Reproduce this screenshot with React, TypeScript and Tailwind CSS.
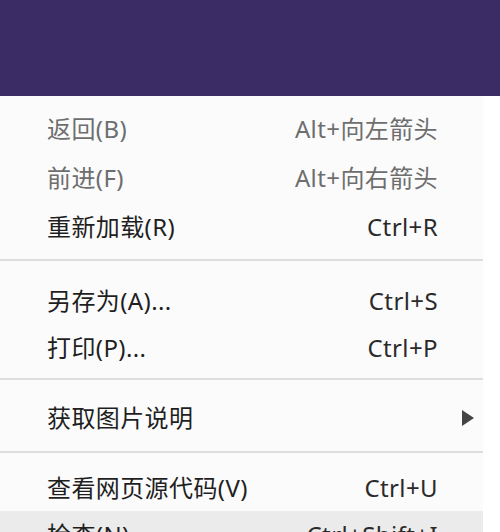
import React from 'react';

type Item = {
  label: string;
  shortcut?: string;
  disabled?: boolean;
  submenu?: boolean;
  active?: boolean;
  h: string;
};

const Row: React.FC<{ item: Item }> = ({ item }) => {
  const labelColor = item.disabled ? 'text-[#6e6e6e]' : 'text-[#1f1f1f]';
  const keyColor = item.disabled ? 'text-[#6e6e6e]' : 'text-[#2a2a2a]';
  return (
    <div
      className={`flex items-center justify-between pl-[47px] ${item.submenu ? 'pr-[9px]' : 'pr-[45px]'} ${item.h} ${
        item.active ? 'bg-[#ebebeb]' : ''
      }`}
    >
      <span className={labelColor}>{item.label}</span>
      {item.shortcut && <span className={keyColor}>{item.shortcut}</span>}
      {item.submenu && (
        <svg width="12" height="16" viewBox="0 0 12 16" className="fill-[#444]">
          <path d="M0 0 L12 8 L0 16 Z" />
        </svg>
      )}
    </div>
  );
};

const Separator: React.FC<{ className: string }> = ({ className }) => (
  <div className={`h-[2px] bg-[#dedede] ${className}`} />
);

export default function App() {
  return (
    <div className="w-[500px] h-[532px] overflow-hidden bg-white font-['Noto_Sans','Noto_Sans_CJK_SC',sans-serif] text-[24px] tracking-[0.4px] leading-none">
      <div className="h-[96px] bg-[#3b2c66]" />
      <div className="w-[483px] bg-[#fbfbfc] pt-[8px]">
        <Row item={{ label: '返回(B)', shortcut: 'Alt+向左箭头', disabled: true, h: 'h-[49px]' }} />
        <Row item={{ label: '前进(F)', shortcut: 'Alt+向右箭头', disabled: true, h: 'h-[49px]' }} />
        <Row item={{ label: '重新加载(R)', shortcut: 'Ctrl+R', h: 'h-[49px]' }} />
        <Separator className="mt-[8px] mb-[16px]" />
        <Row item={{ label: '另存为(A)...', shortcut: 'Ctrl+S', h: 'h-[47px]' }} />
        <Row item={{ label: '打印(P)...', shortcut: 'Ctrl+P', h: 'h-[47px]' }} />
        <Separator className="mt-[7px] mb-[14px]" />
        <Row item={{ label: '获取图片说明', submenu: true, h: 'h-[48px]' }} />
        <Separator className="mt-[9px] mb-[11px]" />
        <Row item={{ label: '查看网页源代码(V)', shortcut: 'Ctrl+U', h: 'h-[47px]' }} />
        <Row item={{ label: '检查(N)', shortcut: 'Ctrl+Shift+I', active: true, h: 'h-[48px]' }} />
      </div>
    </div>
  );
}
